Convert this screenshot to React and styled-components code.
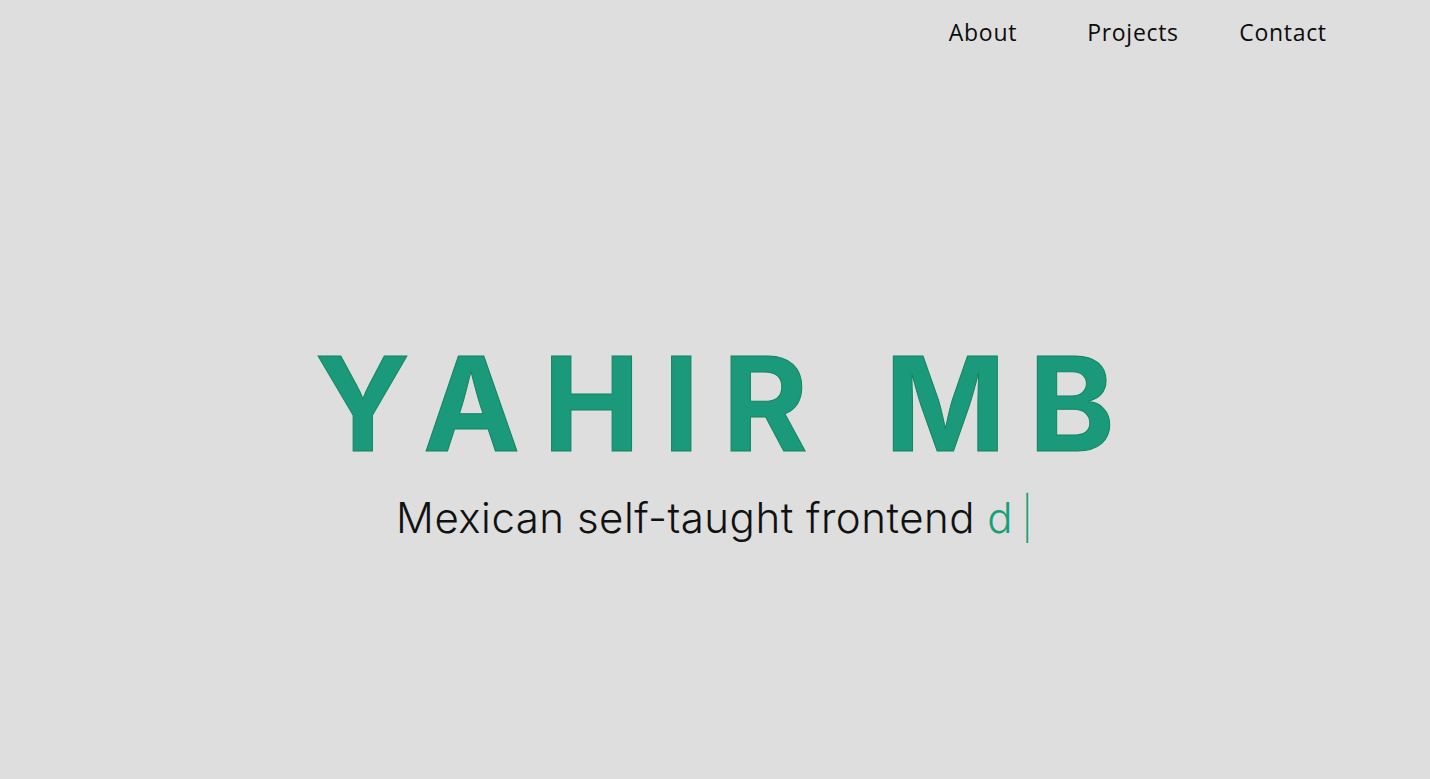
import styled, { createGlobalStyle } from 'styled-components';

const GlobalStyle = createGlobalStyle`
  html, body {
    margin: 0;
    padding: 0;
    background-color: #dedede;
  }
  * {
    box-sizing: border-box;
  }
`;

const Page = styled.div`
  min-height: 100vh;
  display: flex;
  flex-direction: column;
`;

const Nav = styled.nav`
  display: flex;
  justify-content: flex-end;
  padding: 13px 72px 0 0;
  height: 66px;
`;

const NavLink = styled.a`
  width: 150px;
  text-align: center;
  font-family: 'Open Sans', sans-serif;
  font-size: 23px;
  letter-spacing: 0.7px;
  line-height: 38px;
  color: #0c0c0c;
  text-decoration: none;
  cursor: pointer;
`;

const Hero = styled.main`
  display: flex;
  flex-direction: column;
  align-items: center;
  padding-top: 268px;
`;

const Title = styled.h1`
  margin: 0;
  font-family: Inter, 'Liberation Sans', sans-serif;
  font-weight: 700;
  font-size: 130px;
  line-height: 140px;
  letter-spacing: 23px;
  margin-right: -23px;
  color: #1a9a7b;
  -webkit-text-stroke: 1px #12865f;
`;

const Subtitle = styled.p`
  margin: 18px 0 0;
  font-family: Inter, 'Open Sans', sans-serif;
  font-weight: 300;
  font-size: 42px;
  letter-spacing: 0.5px;
  line-height: 52px;
  color: #111;
`;

const Typed = styled.span`
  color: #16a07a;
`;

const Cursor = styled.span`
  color: #16a07a;
  margin-left: 8px;
  font-weight: 200;
`;

export default function App() {
  return (
    <>
      <GlobalStyle />
      <Page>
        <Nav>
          <NavLink>About</NavLink>
          <NavLink>Projects</NavLink>
          <NavLink>Contact</NavLink>
        </Nav>
        <Hero>
          <Title>YAHIR MB</Title>
          <Subtitle>
            Mexican self-taught frontend <Typed>d</Typed>
            <Cursor>|</Cursor>
          </Subtitle>
        </Hero>
      </Page>
    </>
  );
}
